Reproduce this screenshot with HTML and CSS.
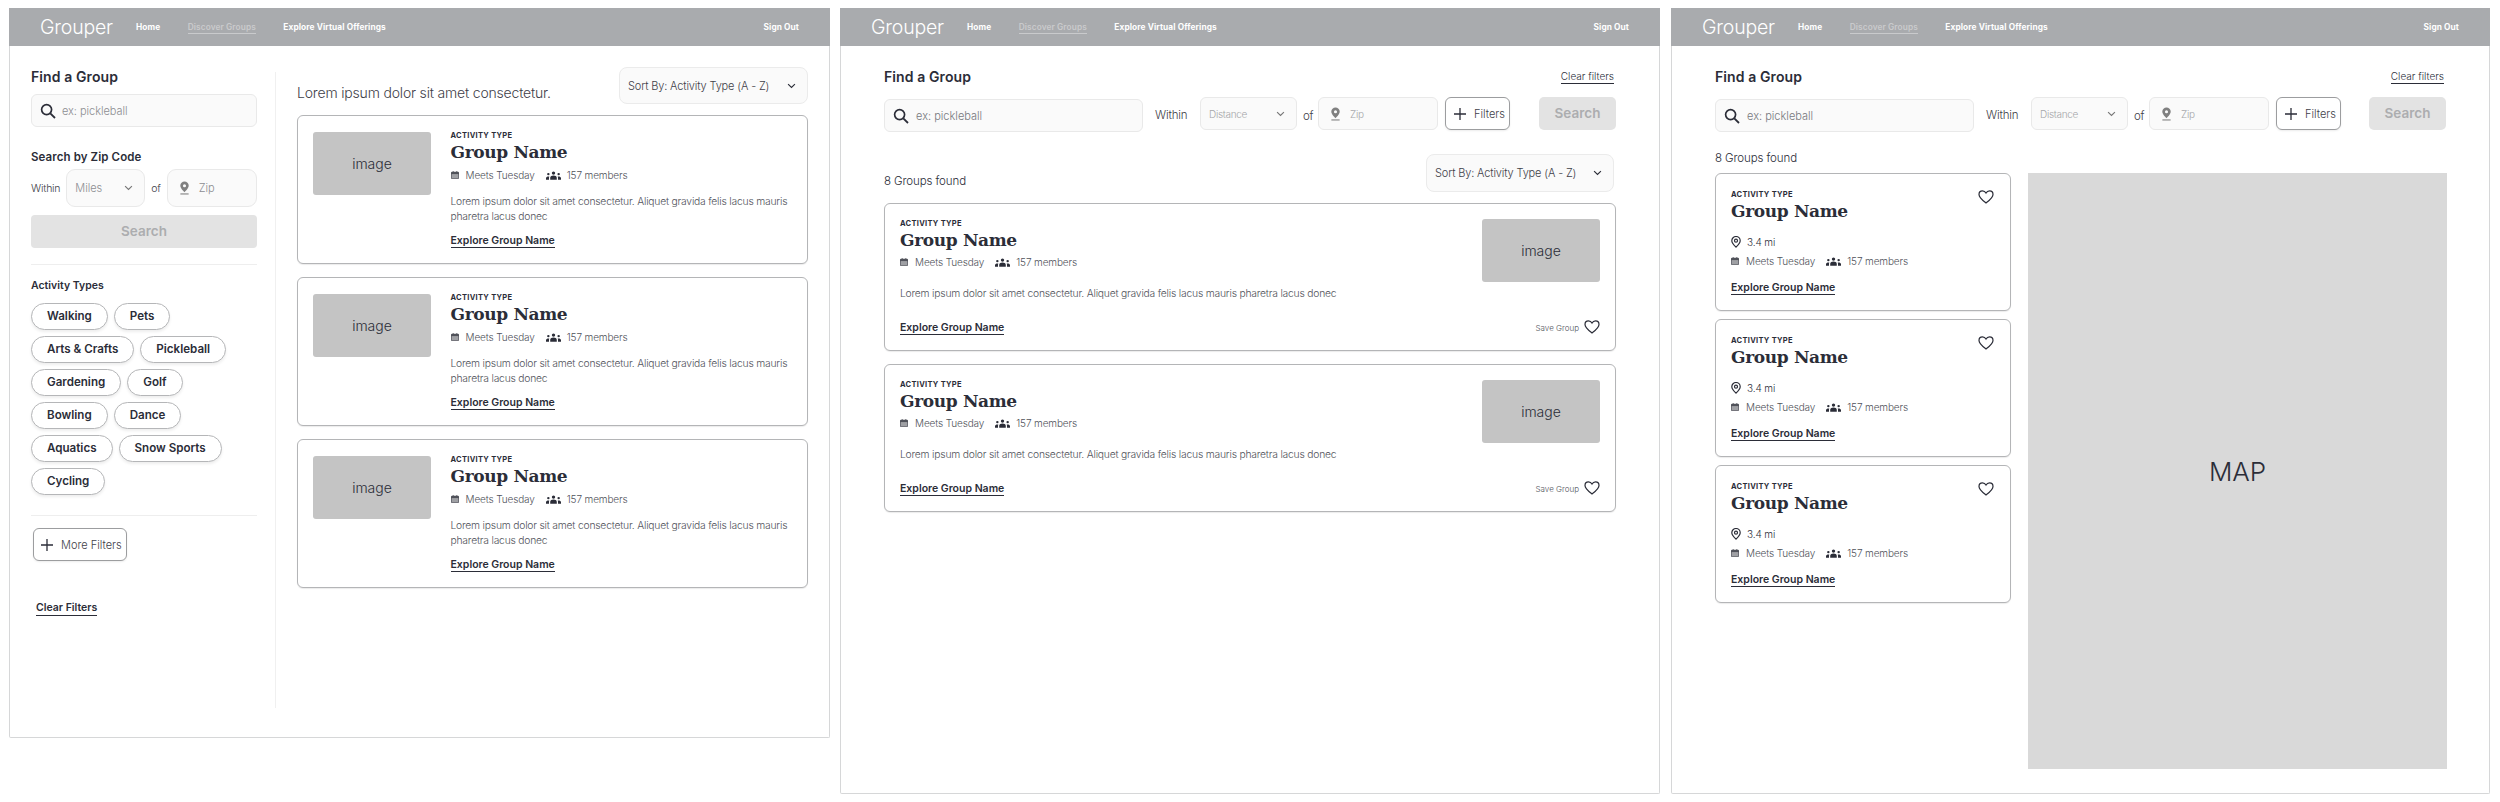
FILE: index.html
```html
<!DOCTYPE html>
<html lang="en">
<head>
<meta charset="utf-8">
<title>Grouper</title>
<link rel="stylesheet" href="styles.css">
</head>
<body>
<svg class="defs" aria-hidden="true">
  <symbol id="i-search" viewBox="0 0 16 16"><circle cx="6.6" cy="6.6" r="5" fill="none" stroke="currentColor" stroke-width="1.7"/><path d="M10.3 10.3L15 15" fill="none" stroke="currentColor" stroke-width="1.8"/></symbol>
  <symbol id="i-chev" viewBox="0 0 10 6"><path d="M1.2 1l3.8 3.6L8.8 1" fill="none" stroke="currentColor" stroke-width="1.3"/></symbol>
  <symbol id="i-pin" viewBox="0 0 12 15"><path fill-rule="evenodd" d="M6 0.5a4.6 4.6 0 0 1 4.6 4.6C10.600 8 6 12 6 12S1.400 8 1.400 5.100A4.600 4.600 0 0 1 6 0.500zM6 3.400a1.700 1.700 0 1 0 0 3.400a1.700 1.700 0 0 0 0-3.400z" fill="currentColor"/><path d="M1.500 14h9" stroke="currentColor" stroke-width="1.200"/></symbol>
  <symbol id="i-plus" viewBox="0 0 12 12"><path d="M6 0v12M0 6h12" fill="none" stroke="currentColor" stroke-width="1.300"/></symbol>
  <symbol id="i-cal" viewBox="0 0 10 10"><path fill-rule="evenodd" d="M2.200 0h1v1h3.600V0h1v1h.9A1.300 1.300 0 0 1 10 2.300v6.400A1.300 1.300 0 0 1 8.700 10H1.300A1.300 1.300 0 0 1 0 8.700V2.300A1.300 1.300 0 0 1 1.300 1h.9zM1 4v4.700c0 .2.100.3.300.3h7.400c.2 0 .3-.1.300-.3V4z" fill="currentColor"/><path d="M1 4h8v5H1z" fill="currentColor" opacity=".55"/></symbol>
  <symbol id="i-people" viewBox="0 0 16 9"><circle cx="8" cy="1.900" r="1.800" fill="currentColor"/><path d="M4.500 9V6.800C4.500 5.400 6.200 4.500 8 4.500s3.500.9 3.500 2.300V9z" fill="currentColor"/><circle cx="2.500" cy="3" r="1.300" fill="currentColor"/><path d="M0 9V7.500C0 6.300 1.200 5.600 2.500 5.600c.4 0 .8.100 1.100.2-.3.300-.4.700-.4 1V9z" fill="currentColor"/><circle cx="13.500" cy="3" r="1.300" fill="currentColor"/><path d="M16 9V7.500C16 6.300 14.800 5.600 13.500 5.600c-.4 0-.8.100-1.100.2.300.3.4.7.4 1V9z" fill="currentColor"/></symbol>
  <symbol id="i-heart" viewBox="0 0 18 16"><path d="M9 14.800C5 11.700 1 8.800 1 5.100C1 2.800 2.800 1 5 1c1.700 0 3.100.9 4 2.500C9.900 1.900 11.300 1 13 1c2.200 0 4 1.800 4 4.100C17 8.800 13 11.700 9 14.800z" fill="none" stroke="currentColor" stroke-width="1.400"/></symbol>
  <symbol id="i-ring" viewBox="0 0 10 12"><path d="M5 11.200C2.800 9 .8 6.900 .8 4.700A4.200 4.200 0 0 1 9.200 4.700C9.200 6.900 7.200 9 5 11.200z" fill="none" stroke="currentColor" stroke-width="1.200"/><circle cx="5" cy="4.700" r="1.500" fill="none" stroke="currentColor" stroke-width="1.200"/></symbol>
</svg>

<div class="page">

  <section class="panel panel-short">
    <nav class="nav">
      <span class="logo">Grouper</span>
      <a class="nav-link">Home</a>
      <a class="nav-link nav-active">Discover Groups</a>
      <a class="nav-link">Explore Virtual Offerings</a>
      <a class="nav-link nav-out">Sign Out</a>
    </nav>
    <div class="split">
      <aside class="side">
        <h2 class="title">Find a Group</h2>
        <div class="field side-search"><svg class="ic-search"><use href="#i-search"/></svg><span class="ph-main">ex: pickleball</span></div>
        <h3 class="sub sub-zip">Search by Zip Code</h3>
        <div class="zip-row">
          <span class="lbl-small">Within</span>
          <div class="field field-tall miles"><span class="ph-main">Miles</span><svg class="ic-chev"><use href="#i-chev"/></svg></div>
          <span class="lbl-small">of</span>
          <div class="field field-tall zip-side"><svg class="ic-pin"><use href="#i-pin"/></svg><span class="ph-main">Zip</span></div>
        </div>
        <div class="btn-off side-btn">Search</div>
        <hr class="line line-a">
        <h3 class="sub sub-act">Activity Types</h3>
        <div class="chips">
          <span class="chip">Walking</span><span class="chip">Pets</span>
          <span class="chip">Arts &amp; Crafts</span><span class="chip">Pickleball</span>
          <span class="chip">Gardening</span><span class="chip">Golf</span>
          <span class="chip">Bowling</span><span class="chip">Dance</span>
          <span class="chip">Aquatics</span><span class="chip">Snow Sports</span>
          <span class="chip">Cycling</span>
        </div>
        <hr class="line line-b">
        <div class="btn-line more"><svg class="ic-plus"><use href="#i-plus"/></svg>More Filters</div>
        <a class="clear-side">Clear Filters</a>
      </aside>
      <div class="vrule"></div>
      <main class="results">
        <div class="results-top">
          <p class="lead">Lorem ipsum dolor sit amet consectetur.</p>
          <div class="sort sort-a"><span>Sort By: Activity Type (A - Z)</span><svg class="ic-chev dark"><use href="#i-chev"/></svg></div>
        </div>
        <div class="stack-a">
          <article class="card card-a">
            <div class="img">image</div>
            <div class="card-text">
              <div class="kicker">ACTIVITY TYPE</div>
              <div class="gname">Group Name</div>
              <div class="meta meta-a"><svg class="ic-cal"><use href="#i-cal"/></svg><span>Meets Tuesday</span><svg class="ic-people"><use href="#i-people"/></svg><span>157 members</span></div>
              <p class="desc desc-a">Lorem ipsum dolor sit amet consectetur. Aliquet gravida felis lacus mauris pharetra lacus donec</p>
              <a class="explore explore-a">Explore Group Name</a>
            </div>
          </article>
          <article class="card card-a">
            <div class="img">image</div>
            <div class="card-text">
              <div class="kicker">ACTIVITY TYPE</div>
              <div class="gname">Group Name</div>
              <div class="meta meta-a"><svg class="ic-cal"><use href="#i-cal"/></svg><span>Meets Tuesday</span><svg class="ic-people"><use href="#i-people"/></svg><span>157 members</span></div>
              <p class="desc desc-a">Lorem ipsum dolor sit amet consectetur. Aliquet gravida felis lacus mauris pharetra lacus donec</p>
              <a class="explore explore-a">Explore Group Name</a>
            </div>
          </article>
          <article class="card card-a">
            <div class="img">image</div>
            <div class="card-text">
              <div class="kicker">ACTIVITY TYPE</div>
              <div class="gname">Group Name</div>
              <div class="meta meta-a"><svg class="ic-cal"><use href="#i-cal"/></svg><span>Meets Tuesday</span><svg class="ic-people"><use href="#i-people"/></svg><span>157 members</span></div>
              <p class="desc desc-a">Lorem ipsum dolor sit amet consectetur. Aliquet gravida felis lacus mauris pharetra lacus donec</p>
              <a class="explore explore-a">Explore Group Name</a>
            </div>
          </article>
        </div>
      </main>
    </div>
  </section>

  <section class="panel panel-mid">
    <nav class="nav">
      <span class="logo">Grouper</span>
      <a class="nav-link">Home</a>
      <a class="nav-link nav-active">Discover Groups</a>
      <a class="nav-link">Explore Virtual Offerings</a>
      <a class="nav-link nav-out">Sign Out</a>
    </nav>
    <div class="wide">
      <div class="title-row"><h2 class="title">Find a Group</h2><a class="clear-top">Clear filters</a></div>
      <div class="filter-row">
        <div class="field wide-search"><svg class="ic-search"><use href="#i-search"/></svg><span class="ph-big">ex: pickleball</span></div>
        <span class="lbl-big lbl-within">Within</span>
        <div class="field dist"><span class="ph-light">Distance</span><svg class="ic-chev"><use href="#i-chev"/></svg></div>
        <span class="lbl-big lbl-of">of</span>
        <div class="field zip-wide"><svg class="ic-pin"><use href="#i-pin"/></svg><span class="ph-light">Zip</span></div>
        <div class="btn-line filters"><svg class="ic-plus"><use href="#i-plus"/></svg>Filters</div>
        <div class="btn-off wide-btn">Search</div>
      </div>
      <div class="found-row">
        <span class="found">8 Groups found</span>
        <div class="sort sort-b"><span>Sort By: Activity Type (A - Z)</span><svg class="ic-chev dark"><use href="#i-chev"/></svg></div>
      </div>
      <div class="stack-b">
        <article class="card card-b">
          <div class="card-text">
            <div class="kicker">ACTIVITY TYPE</div>
            <div class="gname">Group Name</div>
            <div class="meta meta-b"><svg class="ic-cal"><use href="#i-cal"/></svg><span>Meets Tuesday</span><svg class="ic-people"><use href="#i-people"/></svg><span>157 members</span></div>
            <p class="desc desc-b">Lorem ipsum dolor sit amet consectetur. Aliquet gravida felis lacus mauris pharetra lacus donec</p>
            <a class="explore explore-b">Explore Group Name</a>
          </div>
          <div class="card-side">
            <div class="img">image</div>
            <div class="save"><span>Save Group</span><svg class="ic-heart"><use href="#i-heart"/></svg></div>
          </div>
        </article>
        <article class="card card-b">
          <div class="card-text">
            <div class="kicker">ACTIVITY TYPE</div>
            <div class="gname">Group Name</div>
            <div class="meta meta-b"><svg class="ic-cal"><use href="#i-cal"/></svg><span>Meets Tuesday</span><svg class="ic-people"><use href="#i-people"/></svg><span>157 members</span></div>
            <p class="desc desc-b">Lorem ipsum dolor sit amet consectetur. Aliquet gravida felis lacus mauris pharetra lacus donec</p>
            <a class="explore explore-b">Explore Group Name</a>
          </div>
          <div class="card-side">
            <div class="img">image</div>
            <div class="save"><span>Save Group</span><svg class="ic-heart"><use href="#i-heart"/></svg></div>
          </div>
        </article>
      </div>
    </div>
  </section>

  <section class="panel panel-map">
    <nav class="nav">
      <span class="logo">Grouper</span>
      <a class="nav-link">Home</a>
      <a class="nav-link nav-active">Discover Groups</a>
      <a class="nav-link">Explore Virtual Offerings</a>
      <a class="nav-link nav-out">Sign Out</a>
    </nav>
    <div class="wide">
      <div class="title-row"><h2 class="title">Find a Group</h2><a class="clear-top">Clear filters</a></div>
      <div class="filter-row">
        <div class="field wide-search"><svg class="ic-search"><use href="#i-search"/></svg><span class="ph-big">ex: pickleball</span></div>
        <span class="lbl-big lbl-within">Within</span>
        <div class="field dist"><span class="ph-light">Distance</span><svg class="ic-chev"><use href="#i-chev"/></svg></div>
        <span class="lbl-big lbl-of">of</span>
        <div class="field zip-wide"><svg class="ic-pin"><use href="#i-pin"/></svg><span class="ph-light">Zip</span></div>
        <div class="btn-line filters"><svg class="ic-plus"><use href="#i-plus"/></svg>Filters</div>
        <div class="btn-off wide-btn">Search</div>
      </div>
      <div class="found found-map">8 Groups found</div>
      <div class="map-split">
        <div class="stack-c">
          <article class="card card-c">
            <svg class="ic-heart heart-top"><use href="#i-heart"/></svg>
            <div class="kicker">ACTIVITY TYPE</div>
            <div class="gname">Group Name</div>
            <div class="meta meta-dist"><svg class="ic-ring"><use href="#i-ring"/></svg><span>3.4 mi</span></div>
            <div class="meta meta-c"><svg class="ic-cal"><use href="#i-cal"/></svg><span>Meets Tuesday</span><svg class="ic-people"><use href="#i-people"/></svg><span>157 members</span></div>
            <a class="explore explore-c">Explore Group Name</a>
          </article>
          <article class="card card-c">
            <svg class="ic-heart heart-top"><use href="#i-heart"/></svg>
            <div class="kicker">ACTIVITY TYPE</div>
            <div class="gname">Group Name</div>
            <div class="meta meta-dist"><svg class="ic-ring"><use href="#i-ring"/></svg><span>3.4 mi</span></div>
            <div class="meta meta-c"><svg class="ic-cal"><use href="#i-cal"/></svg><span>Meets Tuesday</span><svg class="ic-people"><use href="#i-people"/></svg><span>157 members</span></div>
            <a class="explore explore-c">Explore Group Name</a>
          </article>
          <article class="card card-c">
            <svg class="ic-heart heart-top"><use href="#i-heart"/></svg>
            <div class="kicker">ACTIVITY TYPE</div>
            <div class="gname">Group Name</div>
            <div class="meta meta-dist"><svg class="ic-ring"><use href="#i-ring"/></svg><span>3.4 mi</span></div>
            <div class="meta meta-c"><svg class="ic-cal"><use href="#i-cal"/></svg><span>Meets Tuesday</span><svg class="ic-people"><use href="#i-people"/></svg><span>157 members</span></div>
            <a class="explore explore-c">Explore Group Name</a>
          </article>
        </div>
        <div class="map">MAP</div>
      </div>
    </div>
  </section>

</div>
</body>
</html>
```

FILE: styles.css
```css
* { box-sizing: border-box; }
html, body { margin: 0; padding: 0; background: #fff; }
body { font-family: Inter, "Liberation Sans", sans-serif; color: #2b2d38; overflow: hidden; }
.defs { display: none; }
h2, h3, p, hr { margin: 0; }

.page { display: flex; align-items: flex-start; padding: 8px 0 0 9px; }
.panel { border: 1px solid #d6d7d8; border-top: 0; background: #fff; border-radius: 0 0 2px 2px; flex: none; }
.panel-short { width: 821px; height: 730px; }
.panel-mid { width: 820px; height: 786px; margin-left: 10px; }
.panel-map { width: 819px; height: 786px; margin-left: 11px; }

.nav { height: 38px; margin: 0 -1px; background: #a9abae; display: flex; align-items: center; padding: 0 31px; }
.logo { font-size: 19.500px; font-weight: 300; color: #fff; width: 68px; margin-right: 28px; letter-spacing: -.2px; }
.nav-link { font-size: 8.300px; font-weight: 700; color: #fff; margin-right: 27.500px; letter-spacing: .1px; }
.nav-active { color: #c9cacc; border-bottom: 1px solid #c9cacc; line-height: 12px; margin-top: 1px; font-weight: 600; }
.nav-out { margin-left: auto; margin-right: 0; }

.title { font-size: 14px; line-height: 20px; font-weight: 600; color: #2b2d38; letter-spacing: .1px; }
.sub { font-weight: 600; color: #2b2d38; }

.field { display: flex; align-items: center; border: 1px solid #e9e9e9; border-radius: 6px; background: #fafafa; flex: none; }
.ic-search { width: 16px; height: 16px; color: #2b2d38; flex: none; }
.ic-chev { width: 9px; height: 6px; color: #777; flex: none; margin-left: auto; }
.ic-chev.dark { color: #2b2d38; }
.ic-pin { width: 11px; height: 14px; color: #808080; flex: none; }
.ic-plus { width: 12px; height: 12px; color: #2b2d38; flex: none; }
.ic-cal { width: 8px; height: 8px; color: #50525a; flex: none; }
.ic-people { width: 15px; height: 9px; color: #2b2d38; flex: none; }
.ic-heart { width: 16px; height: 14px; color: #2b2d38; flex: none; }
.ic-ring { width: 10px; height: 12px; color: #2b2d38; flex: none; }

.ph-main { font-size: 11px; font-weight: 300; color: #8c8d91; letter-spacing: -.05px; }
.ph-big { font-size: 11px; font-weight: 300; color: #77787d; }
.ph-light { font-size: 10px; font-weight: 300; color: #a5a6a9; letter-spacing: -.3px; }
.lbl-small { font-size: 10.500px; font-weight: 300; color: #3e4048; letter-spacing: -.2px; }
.lbl-big { font-size: 11.500px; font-weight: 300; color: #3e4048; letter-spacing: -.2px; }

.btn-off { background: #e3e3e3; border-radius: 4px; color: #acadaf; font-weight: 600; text-align: center; }
.btn-line { display: flex; align-items: center; border: 1px solid #9c9d9f; border-radius: 6px; background: #fff; font-weight: 300; color: #3e4048; box-shadow: 0 1px 2px rgba(0,0,0,.08); flex: none; }

/* panel one */
.split { display: flex; align-items: flex-start; padding: 21px 0 0 21px; }
.side { width: 226px; flex: none; }
.side-search { height: 33px; margin-top: 7px; padding-left: 8px; gap: 6px; }
.sub-zip { font-size: 11.500px; line-height: 16px; margin-top: 22px; letter-spacing: .1px; }
.zip-row { display: flex; align-items: center; gap: 6px; margin-top: 4px; }
.field-tall { height: 38px; border-radius: 9px; }
.miles { width: 79px; padding: 0 11px 0 8px; }
.zip-side { width: 90px; padding-left: 11px; gap: 9px; }
.side-btn { height: 33px; line-height: 33px; margin-top: 8px; font-size: 13.500px; }
.line { border: 0; height: 1px; background: #eeeeee; }
.line-a { margin-top: 16px; }
.sub-act { font-size: 10.500px; line-height: 14px; margin-top: 14px; }
.chips { display: flex; flex-wrap: wrap; gap: 6px; margin-top: 10px; }
.chip { height: 27px; line-height: 25px; padding: 0 15px; border: 1px solid #b5b6b8; border-radius: 14px; font-size: 11.600px; font-weight: 600; color: #2b2d38; background: #fff; box-shadow: 0 2px 3px rgba(0,0,0,.07); white-space: nowrap; }
.line-b { margin-top: 20px; }
.more { width: 94px; height: 33px; margin: 12px 0 0 2px; padding-left: 7px; gap: 8px; font-size: 11px; white-space: nowrap; }
.clear-side { display: inline-block; margin: 40px 0 0 5px; font-size: 10.500px; font-weight: 600; line-height: 14px; border-bottom: 1px solid #2b2d38; color: #2b2d38; }
.vrule { width: 1px; height: 636px; margin: 5px 0 0 18px; background: #f0f0f0; flex: none; }
.results { width: 511px; margin-left: 21px; flex: none; }
.results-top { display: flex; justify-content: space-between; align-items: flex-end; }
.lead { font-size: 14px; line-height: 20px; font-weight: 300; color: #3e4048; letter-spacing: -.18px; padding-bottom: 1px; }
.sort { display: flex; align-items: center; background: #fafafa; border: 1px solid #ebebeb; border-radius: 8px; font-size: 11px; font-weight: 300; color: #3e4048; letter-spacing: -.15px; white-space: nowrap; }
.sort-a { width: 189px; height: 37px; padding: 0 11px 0 8px; }
.stack-a { display: flex; flex-direction: column; gap: 13px; margin-top: 11px; }

.card { border: 1px solid #b4b5b7; border-radius: 6px; background: #fff; box-shadow: 0 1px 1px rgba(0,0,0,.08); }
.card-a { height: 149px; display: flex; padding: 16px 18px 16px 15px; gap: 19.500px; }
.img { width: 118px; height: 63px; background: #c4c4c4; border-radius: 3px; font-size: 14px; font-weight: 300; color: #2b2d38; display: flex; align-items: center; justify-content: center; flex: none; }
.card-text { flex: 1; min-width: 0; margin-top: -1px; }
.kicker { font-size: 7.500px; line-height: 10px; font-weight: 700; letter-spacing: .3px; color: #2b2d38; }
.gname { font-family: "DejaVu Serif", serif; font-weight: 700; font-size: 17px; line-height: 22px; color: #2b2d38; letter-spacing: -.35px; }
.meta { display: flex; align-items: center; font-size: 10px; line-height: 14px; font-weight: 300; color: #50525a; letter-spacing: -.12px; }
.meta .ic-cal { margin-right: 7px; }
.meta .ic-people { margin: 0 6px 0 11px; }
.meta-a { margin-top: 5px; }
.desc { font-size: 10.300px; line-height: 15px; font-weight: 300; color: #50525a; letter-spacing: -.2px; }
.desc-a { margin-top: 12px; }
.explore { display: inline-block; font-size: 10.500px; font-weight: 600; line-height: 13px; border-bottom: 1px solid #2b2d38; color: #2b2d38; }
.explore-a { margin-top: 10px; }

/* wide panels */
.wide { padding: 21px 43px 0; }
.title-row { display: flex; justify-content: space-between; align-items: center; }
.clear-top { font-size: 10px; font-weight: 300; line-height: 13px; border-bottom: 1px solid #2b2d38; color: #2b2d38; margin-right: 2px; }
.filter-row { display: flex; align-items: flex-start; height: 35px; margin-top: 10px; }
.wide-search { width: 259px; height: 33px; margin-top: 2px; padding-left: 8px; gap: 7px; }
.lbl-within { line-height: 36px; margin-left: 12px; width: 33px; }
.dist { width: 97px; height: 33px; margin-left: 12px; padding: 0 11px 0 8px; }
.lbl-of { line-height: 38px; margin-left: 6px; width: 9px; }
.zip-wide { width: 120px; height: 33px; margin-left: 6px; padding-left: 11px; gap: 9px; }
.filters { width: 65px; height: 33px; margin-left: 7px; padding-left: 8px; gap: 8px; font-size: 11px; }
.wide-btn { width: 77px; height: 33px; line-height: 33px; margin-left: auto; font-size: 13.500px; border-radius: 5px; }
.found-row { display: flex; justify-content: space-between; align-items: flex-end; margin-top: 22px; }
.found { font-size: 11.500px; line-height: 18px; font-weight: 300; color: #2b2d38; letter-spacing: -.1px; padding-bottom: 2px; }
.sort-b { width: 188px; height: 38px; margin-right: 2px; padding: 0 11px 0 8px; }
.stack-b { display: flex; flex-direction: column; gap: 13px; margin-top: 11px; }
.card-b { height: 148px; display: flex; padding: 15px; }
.card-b .card-text { margin-top: 0; }
.meta-b { margin-top: 4px; }
.desc-b { margin-top: 17px; white-space: nowrap; }
.explore-b { margin-top: 20px; }
.card-side { width: 118px; display: flex; flex-direction: column; align-items: flex-end; flex: none; }
.card-side .img { width: 118px; }
.save { margin-top: auto; padding-bottom: 1px; display: flex; align-items: flex-end; gap: 5px; font-size: 8px; line-height: 11px; font-weight: 300; color: #50525a; }

/* map panel */
.found-map { margin-top: 17px; padding-bottom: 0; }
.map-split { display: flex; align-items: flex-start; margin-top: 6px; }
.stack-c { width: 296px; display: flex; flex-direction: column; gap: 8px; flex: none; }
.card-c { height: 138px; padding: 16px 15px; position: relative; }
.heart-top { position: absolute; top: 16px; right: 16px; }
.card-c .gname { line-height: 23px; }
.meta-dist { margin-top: 12px; }
.meta-dist .ic-ring { margin-right: 6px; }
.meta-dist span { color: #2b2d38; }
.meta-c { margin-top: 5px; }
.explore-c { margin-top: 13px; }
.map { width: 419px; height: 596px; margin-left: 17px; background: #d9d9d9; display: flex; align-items: center; justify-content: center; font-size: 26px; font-weight: 300; color: #2b2d38; flex: none; }
```
